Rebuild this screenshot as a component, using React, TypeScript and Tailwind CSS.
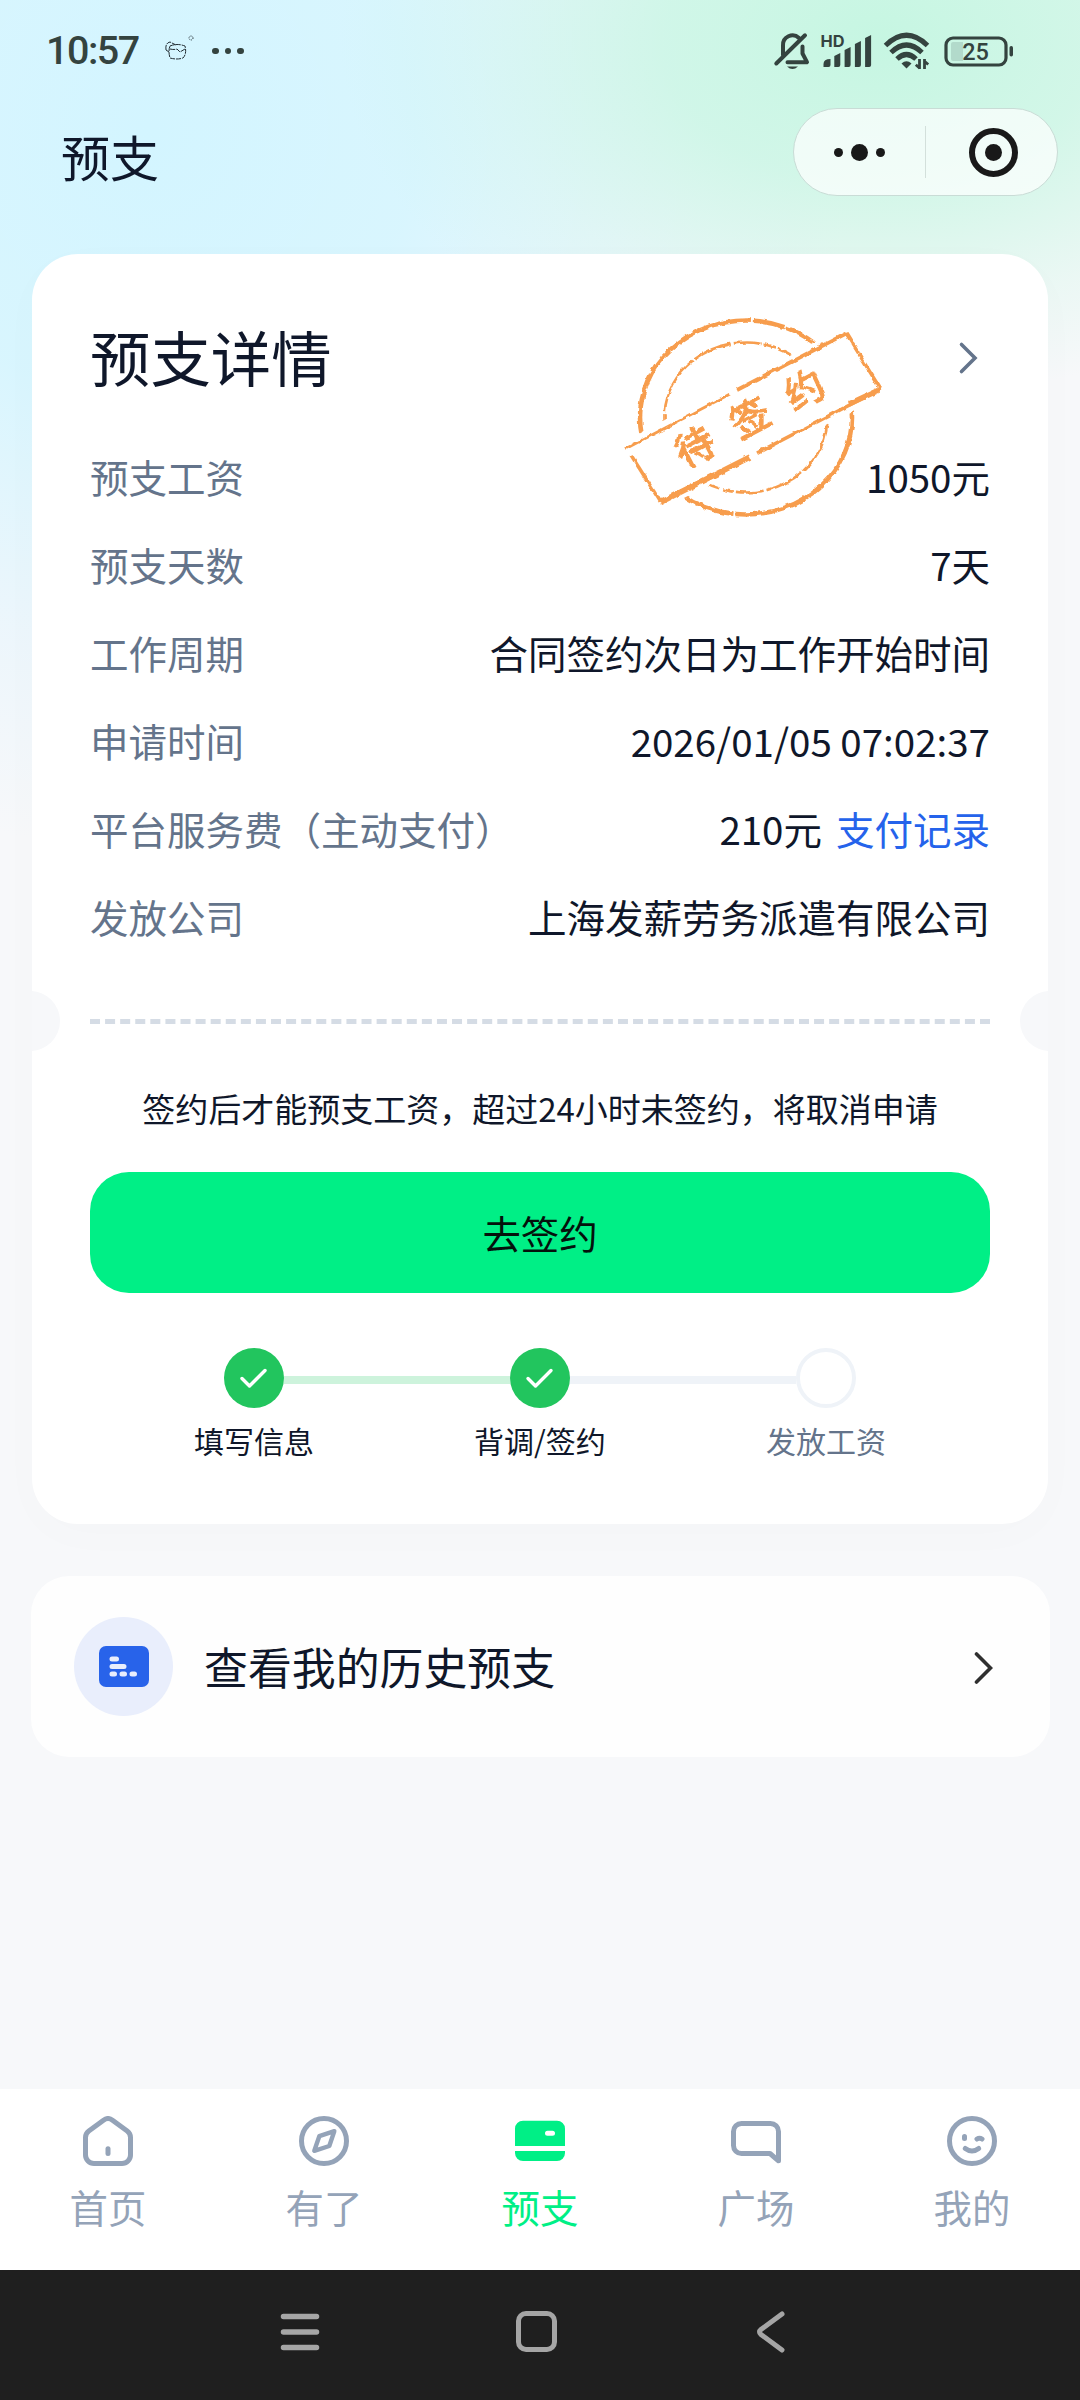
import type { ReactNode } from "react";

const rows = [
    { label: "预支工资", value: "1050元" },
    { label: "预支天数", value: "7天" },
    { label: "工作周期", value: "合同签约次日为工作开始时间" },
    { label: "申请时间", value: "2026/01/05 07:02:37" },
    { label: "平台服务费（主动支付）", value: "210元", link: "支付记录" },
    { label: "发放公司", value: "上海发薪劳务派遣有限公司" },
];

const steps = [
    { label: "填写信息", done: true },
    { label: "背调/签约", done: true },
    { label: "发放工资", done: false },
];

const tabs: { label: string; active?: boolean; icon: ReactNode }[] = [
    {
        label: "首页",
        icon: (
            <>
                <path d="M2.5 21.5c0-2.8 1-4.8 3.3-6.5L20.5 4.2c2.8-2.1 6.2-2.1 9 0L44.2 15c2.3 1.7 3.3 3.7 3.3 6.5v17.5a8.5 8.5 0 0 1-8.5 8.5H11a8.5 8.5 0 0 1-8.5-8.5z" />
                <path d="M25 32.7v4.8" />
            </>
        ),
    },
    {
        label: "有了",
        icon: (
            <>
                <circle cx="25" cy="25" r="22.5" />
                <path d="M35.3 15.2 20.3 20.2 15.3 34.8 30.3 30z" strokeWidth="4.4" />
            </>
        ),
    },
    {
        label: "预支",
        active: true,
        icon: (
            <g fill="currentColor" stroke="none">
                <path
                    fillRule="evenodd"
                    d="M8 4.7h34a8 8 0 0 1 8 8V30H0V12.7a8 8 0 0 1 8-8zM32.5 14.8a2.5 2.5 0 0 0 0 5h5a2.5 2.5 0 0 0 0-5z"
                />
                <path d="M0 35h50v2a8 8 0 0 1-8 8H8a8 8 0 0 1-8-8z" />
            </g>
        ),
    },
    {
        label: "广场",
        icon: <path d="M47.5 44.8 39 37.5H10.5a8 8 0 0 1-8-8v-14a8 8 0 0 1 8-8h29a8 8 0 0 1 8 8z" />,
    },
    {
        label: "我的",
        icon: (
            <>
                <circle cx="25" cy="25" r="22.5" />
                <path d="M17.5 20.5v2" />
                <path d="M30 23q2.5-1.6 5 0" />
                <path d="M18.3 32.5q6.7 5 13.4 0" />
            </>
        ),
    },
];

const StatusBar = () => (
    <div className="flex h-[102px] items-center justify-between pr-[65px] pl-[46px] text-[#34433f]">
        <div className="flex items-center">
            <span className="w-[97px] font-[Roboto] text-[39.5px] leading-none font-medium tracking-[-1.5px]">10:57</span>
            <svg width="30" height="26" viewBox="0 0 30 26" fill="none" className="mt-[-6px] ml-[22px]" stroke="#222d33" strokeWidth="1" strokeDasharray="5 1">
                <path d="M5 11Q12 8 20 11Q22 19 18 23Q12 25 5 23Q3 16 5 11zM5 14q4 1 7 0l3 3 5-3M1 15Q0 8 5 7l6 3M1 15l3 2" />
                <circle cx="26" cy="3" r="2" strokeDasharray="1 1" />
            </svg>
            <div className="ml-[17px] flex gap-[6px]">
                <i className="size-[6.6px] rounded-full bg-current" />
                <i className="size-[6.6px] rounded-full bg-current" />
                <i className="size-[6.6px] rounded-full bg-current" />
            </div>
        </div>
        <div className="flex items-center">
            <svg width="40" height="40" viewBox="0 0 40 40" fill="none" stroke="currentColor" strokeWidth="4" strokeLinecap="round">
                <path d="M11 24V14.5a9.5 9.5 0 0 1 16-7.5" />
                <path d="M30.5 15.5v7l4.5 8.7H15.5" strokeLinejoin="round" />
                <path d="M33 4.3 4.3 32.5" />
                <path d="M15 35.5h11q-5.5 5-11 0z" fill="currentColor" stroke="none" />
            </svg>
            <svg width="54" height="40" viewBox="0 0 54 40" fill="currentColor" className="ml-[8px]">
                <text x="0.5" y="16" fontSize="16" fontWeight="700" fontFamily="Inter, sans-serif" textLength="24" lengthAdjust="spacingAndGlyphs">HD</text>
                <path d="M3.5 36v-3q0-5 7-5v6q0 2-2 2zM14.3 36V25l6-3v12q0 2-2 2zM24.6 36V19l6-3v18q0 2-2 2zM34.9 36V13l6-3v24q0 2-2 2zM45.1 36V7l6-3v30q0 2-2 2z" />
            </svg>
            <svg width="48" height="38" viewBox="0 0 48 38" fill="none" stroke="currentColor" strokeWidth="5" className="ml-[9px]">
                <path d="M2.5 13.5Q23.5-7 44.5 13.5" />
                <path d="M8 20.5Q23.5 5.5 39 20.5" />
                <path d="M14 27Q23.5 18 33 27" />
                <path d="M18.5 31.5q5-4.5 10 0l-5 5z" fill="currentColor" stroke="none" />
                <path d="M36.5 27v10M36.8 36.3l-4-3.5M41.5 37V27M41.2 29l4 3.5" strokeWidth="2.8" />
            </svg>
            <svg width="72" height="34" viewBox="0 0 72 34" className="ml-[12px]">
                <rect x="3" y="4" width="60" height="27" rx="7" fill="none" stroke="currentColor" strokeWidth="3.2" />
                <path d="M10 8h10v19h-10q-2 0-2-2V10q0-2 2-2z" fill="#b2dacb" />
                <rect x="66.5" y="12" width="3.5" height="10.5" rx="1.7" fill="currentColor" />
                <text x="32.5" y="26" textAnchor="middle" fontSize="23.5" fontWeight="500" fontFamily="Roboto, sans-serif" fill="currentColor">25</text>
            </svg>
        </div>
    </div>
);

const NavBar = () => (
    <div className="flex h-[152px] items-start justify-between pr-[22px] pl-[61px]">
        <h1 className="mt-[19px] text-[49px] leading-[70px]">预支</h1>
        <div className="mt-[6px] flex h-[88px] w-[265px] items-center rounded-full border border-[#c9dcd6] bg-white/70">
            <div className="flex w-[131px] items-center justify-center gap-[8px]">
                <i className="size-[9px] rounded-full bg-[#191919]" />
                <i className="size-[17px] rounded-full bg-[#191919]" />
                <i className="size-[9px] rounded-full bg-[#191919]" />
            </div>
            <div className="h-[52px] w-px bg-[#d3e0db]" />
            <div className="ml-[43px] flex size-[49px] items-center justify-center rounded-full border-[6.5px] border-[#191919]">
                <i className="size-[17px] rounded-full bg-[#191919]" />
            </div>
        </div>
    </div>
);

// worn rubber stamp, the filter roughens the edges
const Stamp = () => (
    <svg width="268" height="210" viewBox="0 0 268 210" className="absolute top-[56px] left-[588px]" fill="none" stroke="#f79d4d">
        <filter id="worn" x="-5%" y="-5%" width="110%" height="110%">
            <feTurbulence type="fractalNoise" baseFrequency="0.14" numOctaves="2" seed="4" />
            <feDisplacementMap in="SourceGraphic" scale="4" xChannelSelector="R" yChannelSelector="G" />
        </filter>
        <g filter="url(#worn)">
            <ellipse cx="126" cy="107.5" rx="106" ry="97" strokeWidth="4.6" strokeDasharray="170 2 56 3 28 2 18 4 200 3 31 1.5" />
            <ellipse cx="126" cy="107.5" rx="81.5" ry="75" strokeWidth="2.7" strokeDasharray="60 2 40 3 28 2 12 3 64 3 20 2 9 3" />
            <path d="M5 138 226 23 261 79 40 193z" fill="#fff" stroke="#fff" strokeWidth="13" />
            <path d="M6 138.5 110 84" strokeWidth="2.8" />
            <path d="M117 80 226 23.5" strokeWidth="4" />
            <path d="M226 23 260.5 79" strokeWidth="3.4" strokeDasharray="24 1 60" />
            <path d="M260.5 79 137 143" strokeWidth="3.6" />
            <path d="M259 80 229 94M130 147 41 192" strokeWidth="5.5" />
            <path d="M40.5 192 11 145" strokeWidth="3.4" />
            <g fill="#f79d4d" strokeWidth="1.4" fontSize="39" textAnchor="middle">
                <text transform="translate(75 137) rotate(-27.5)" y="14">待</text>
                <text transform="translate(130 108) rotate(-27.5)" y="14">签</text>
                <text transform="translate(184.5 80) rotate(-27.5)" y="14">约</text>
            </g>
        </g>
    </svg>
);

const DetailCard = () => (
    <section className="relative mx-[32px] h-[1269.5px] shrink-0 overflow-hidden rounded-[46px] bg-white px-[58px] pt-[60px] shadow-[0_10px_50px_rgba(15,23,42,0.015)]">
        <Stamp />
        <div className="flex h-[90px] items-center justify-between">
            <h2 className="mt-[-6px] text-[60.4px] leading-[90px]">预支详情</h2>
            <svg width="20" height="34" viewBox="0 0 20 34" fill="none" stroke="#64748b" strokeWidth="3.6" strokeLinecap="round" className="mt-[-2px] mr-[12.5px]">
                <path d="M3.5 3.5 17 17 3.5 30.5" />
            </svg>
        </div>
        <dl className="mt-[28.5px]">
            {rows.map((row) => (
                <div key={row.label} className="flex h-[88px] items-center justify-between text-[38.5px]">
                    <dt className="text-[#64748b]">{row.label}</dt>
                    <dd>
                        {row.value}
                        {row.link && <a className="ml-[14px] text-[#2563eb]">{row.link}</a>}
                    </dd>
                </div>
            ))}
        </dl>
        <div className="-mx-[90px] mt-[30.5px] flex h-[60px] items-center justify-between">
            <div className="size-[60px] rounded-full bg-[#f7f8fa]" />
            <div className="w-[900px] border-t-[5px] border-dashed border-[#d5dce5]" />
            <div className="size-[60px] rounded-full bg-[#f7f8fa]" />
        </div>
        <p className="mt-[27px] text-center text-[33px] leading-[60px]">签约后才能预支工资，超过24小时未签约，将取消申请</p>
        <button className="mt-[34px] flex h-[121px] w-full items-center justify-center rounded-[39px] bg-[#00ef86] text-[38.4px] text-[#04120c]">
            去签约
        </button>
        <div className="mx-auto mt-[55px] flex w-[632px] items-center">
            {steps.map((step, i) => (
                <div key={step.label} className={i > 0 ? "flex flex-1 items-center" : "flex items-center"}>
                    {i > 0 && <div className={step.done ? "mt-[3px] h-[8px] flex-1 bg-[#cdf3dc]" : "mt-[3px] h-[8px] flex-1 bg-[#eff3f8]"} />}
                    {step.done ? (
                        <div className="flex size-[60px] items-center justify-center rounded-full bg-[#22c55e]">
                            <svg width="30" height="24" viewBox="0 0 30 24" fill="none" stroke="#fff" strokeWidth="3.4" strokeLinecap="round" strokeLinejoin="round">
                                <path d="M3 12.5 10.5 20 26 4.5" />
                            </svg>
                        </div>
                    ) : (
                        <div className="size-[60px] rounded-full border-4 border-[#eff3f8] bg-white" />
                    )}
                </div>
            ))}
        </div>
        <div className="mt-[9px] grid grid-cols-3 px-[21px] text-center text-[30px] leading-[46px]">
            {steps.map((step) => (
                <span key={step.label} className={step.done ? "" : "text-[#64748b]"}>
                    {step.label}
                </span>
            ))}
        </div>
    </section>
);

const HistoryCard = () => (
    <section className="mx-[30.5px] mt-[52px] flex h-[181px] shrink-0 items-center rounded-[38px] bg-[#fefefe] pr-[57px] pl-[43.5px]">
        <div className="flex size-[99px] items-center justify-center rounded-full bg-[#e9eefc]">
            <svg width="50" height="41" viewBox="0 0 50 41">
                <rect width="50" height="41" rx="7" fill="#2863ea" />
                <path d="M13 13h4.5M13 20.5h12M13 28h2.5M23 28h2.5M33 28h2.5" stroke="#e9eefc" strokeWidth="5" strokeLinecap="round" />
            </svg>
        </div>
        <span className="mt-[2px] ml-[31px] text-[43.9px]">查看我的历史预支</span>
        <svg width="20" height="34" viewBox="0 0 20 34" fill="none" stroke="#2f2f2f" strokeWidth="3.6" strokeLinecap="round" className="mt-[3px] ml-auto">
            <path d="M3.5 3 17.5 17 3.5 31" />
        </svg>
    </section>
);

const TabBar = () => (
    <nav className="mt-auto grid h-[181px] shrink-0 grid-cols-5 bg-white">
        {tabs.map((tab) => (
            <div key={tab.label} className={tab.active ? "flex flex-col items-center pt-[27px] text-[#00ef86]" : "flex flex-col items-center pt-[27px] text-[#94a3b8]"}>
                <svg width="50" height="50" viewBox="0 0 50 50" fill="none" stroke="currentColor" strokeWidth="5" strokeLinecap="round" strokeLinejoin="round">
                    {tab.icon}
                </svg>
                <span className="mt-[12px] text-[38.4px] leading-[56px]">{tab.label}</span>
            </div>
        ))}
    </nav>
);

const SystemNav = () => (
    <div className="flex h-[130px] shrink-0 items-center justify-center gap-[195.5px] bg-[#1f1f1f] pr-[8px] pb-[7px]">
        <svg width="40" height="42" viewBox="0 0 40 42" stroke="#a5a5a5" strokeWidth="5.5" strokeLinecap="round">
            <path d="M3.5 5.5h33M3.5 21h33M3.5 36.5h33" />
        </svg>
        <div className="size-[41px] rounded-[10px] border-[5px] border-[#a5a5a5]" />
        <svg width="40" height="42" viewBox="0 0 40 42" fill="none" stroke="#a5a5a5" strokeWidth="5" strokeLinecap="round">
            <path d="M30 3 9 18.5Q6 21 9 23.5L30 39" />
        </svg>
    </div>
);

export default function App() {
    return (
        <main className="flex h-[2400px] w-[1080px] flex-col overflow-hidden bg-[#f7f8fa] bg-[radial-gradient(ellipse_540px_360px_at_880px_40px,#c6f6e2_0%,rgba(198,246,226,0.75)_40%,rgba(198,246,226,0.25)_75%,rgba(198,246,226,0)_100%),radial-gradient(ellipse_700px_720px_at_150px_130px,#d3f5ff_0%,rgba(211,245,255,0.85)_38%,rgba(216,242,255,0.35)_72%,rgba(225,240,255,0)_100%)] font-['Noto_Sans_CJK_SC',sans-serif] text-[#0f172a]">
            <StatusBar />
            <NavBar />
            <DetailCard />
            <HistoryCard />
            <TabBar />
            <SystemNav />
        </main>
    );
}
